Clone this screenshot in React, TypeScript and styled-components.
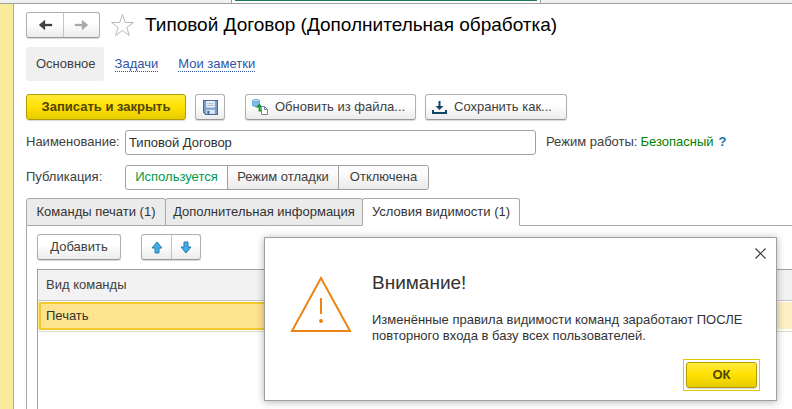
import React from 'react';
import styled, { createGlobalStyle, css } from 'styled-components';

const GlobalStyle = createGlobalStyle`
  *, *::before, *::after { box-sizing: border-box; }
  body {
    margin: 0;
    background: #fff;
    color: #404040;
    font: 13px/16px "Liberation Sans", Arial, sans-serif;
  }
  button, input { font: inherit; color: inherit; }
`;

const Shell = styled.div`
  position: relative;
  display: flex;
  flex-direction: column;
  height: 100vh;
  overflow: hidden;
`;

const TopStrip = styled.div`
  display: flex;
  flex: none;
  height: 4px;
  background: #f0f0f0;
  border-bottom: 1px solid #a0a0a0;
`;

const ActiveWindowTab = styled.div`
  width: 310px;
  margin-left: 231px;
  padding: 0 3px;
  background: #fff;
  border: solid #a0a0a0;
  border-width: 0 1px;

  &::before {
    content: '';
    display: block;
    height: 1px;
    background: #1f7a56;
  }
`;

const Workspace = styled.div`
  display: flex;
  flex: 1;
  min-height: 0;
`;

const SideBar = styled.div`
  flex: none;
  width: 14px;
  background: #f9eb9c;
  border-right: 1px solid #b9ae62;
`;

const Form = styled.main`
  display: flex;
  flex: 1;
  flex-direction: column;
  min-width: 0;
  padding: 8px 0 0 12px;
`;

const Header = styled.header`
  display: flex;
  align-items: center;
  height: 25px;
`;

const raised = css`
  background: linear-gradient(#fff 40%, #ececec);
  border: 1px solid #b0b0b0;
  border-bottom-color: #989898;
  border-radius: 3px;
  box-shadow: 0 1px 1px #d8d8d8;
`;

const ButtonPair = styled.div`
  ${raised}
  display: flex;
  height: 26px;
`;

const PairButton = styled.button<{ $width: number }>`
  display: grid;
  place-items: center;
  width: ${(p) => p.$width}px;
  padding: 0;
  background: none;
  border: 0;

  & + & { border-left: 1px solid #c4c4c4; }
`;

const StarButton = styled.button`
  display: flex;
  margin: 0 10px;
  padding: 0;
  background: none;
  border: 0;
`;

const Title = styled.h1`
  margin: 0;
  color: #000;
  font-size: 19px;
  font-weight: 400;
  line-height: 24px;
  white-space: nowrap;
`;

const SectionNav = styled.nav`
  display: flex;
  align-items: center;
  gap: 20px;
  height: 34px;
  margin-top: 10px;
`;

const CurrentSection = styled.span`
  padding: 9px 8px 9px 10px;
  margin-right: -9px;
  background: #f0f0f0;
  border-radius: 3px;
`;

const SectionLink = styled.a`
  color: #2f55a4;
  line-height: 14px;
  text-decoration: none;
  border-bottom: 1px dotted #2f55a4;
`;

const Toolbar = styled.div`
  display: flex;
  gap: 9px;
  margin-top: 13px;
`;

const Button = styled.button<{ $width: number }>`
  ${raised}
  display: flex;
  align-items: center;
  justify-content: center;
  width: ${(p) => p.$width}px;
  height: 26px;
  padding: 0;
  white-space: nowrap;
`;

const IconButton = styled(Button)`
  justify-content: flex-start;
  gap: 7px;
  padding: 0 6px;
`;

const PrimaryButton = styled(Button)`
  color: #514500;
  font-weight: 700;
  background: linear-gradient(#ffeb3b, #ffe100 50%, #e6cb00);
  border-color: #b29d00;
`;

const FileButtons = styled.div`
  display: flex;
  gap: 9px;
  margin-left: 11px;
`;

const FieldRow = styled.div`
  display: flex;
  align-items: center;
  height: 26px;
  margin-top: 9px;
`;

const FieldLabel = styled.label`
  flex: none;
  width: 99px;
`;

const TextInput = styled.input`
  flex: 0 1 411px;
  min-width: 0;
  height: 25px;
  padding: 0 3px;
  color: #303030;
  background: #fff;
  border: 1px solid #a0a0a0;
  border-radius: 3px;
`;

const ModeInfo = styled.div`
  display: flex;
  gap: 3px;
  margin-left: 10px;
  white-space: nowrap;
`;

const ModeValue = styled.span`
  color: #008000;
`;

const HelpLink = styled.a`
  margin-left: 2px;
  color: #1a72a8;
  font-weight: 700;
  text-decoration: none;
`;

const Segments = styled.fieldset`
  display: flex;
  height: 25px;
  margin: 0;
  padding: 0;
  border: 1px solid #a0a0a0;
  border-radius: 3px;
  overflow: hidden;
`;

const Segment = styled.label<{ $width: number }>`
  display: grid;
  place-items: center;
  width: ${(p) => p.$width}px;
  background: linear-gradient(#fcfcfc 30%, #eaeaea);

  & + & { border-left: 1px solid #a0a0a0; }
  &:has(input:checked) { color: #00994d; background: #fff; }
  input { position: absolute; opacity: 0; pointer-events: none; }
`;

const Tabs = styled.div`
  display: flex;
  flex: none;
  height: 28px;
  margin-top: 8px;

  &::after {
    content: '';
    flex: 1;
    border-bottom: 1px solid #a8a8a8;
  }
`;

const Tab = styled.button<{ $width: number; $active?: boolean }>`
  width: ${(p) => p.$width}px;
  padding: 0;
  color: #333;
  white-space: nowrap;
  background: ${(p) => (p.$active ? '#fff' : '#ebebeb')};
  border: 1px solid #a8a8a8;
  border-bottom-color: ${(p) => (p.$active ? '#fff' : '#a8a8a8')};
  border-radius: 3px 3px 0 0;

  & + & { margin-left: -1px; }
`;

const TabPanel = styled.section`
  display: flex;
  flex: 1;
  flex-direction: column;
  padding: 8px 0 0 10px;
  border-left: 1px solid #a8a8a8;
`;

const PanelToolbar = styled.div`
  display: flex;
  gap: 20px;
  height: 26px;
`;

const GridFrame = styled.div`
  flex: 1;
  margin-top: 9px;
  border: solid #a0a0a0;
  border-width: 1px 0 0 1px;
`;

const Grid = styled.table`
  width: 100%;
  border-spacing: 0;
  table-layout: fixed;

  th, td { padding: 0 8px; text-align: left; font-weight: 400; }
  th { height: 31px; background: #f2f2f2; border-bottom: 1px solid #c8c8c8; }
`;

const Cell = styled.td<{ $selected?: boolean }>`
  height: 30px;
  color: #333;
  background: #fdf0c4;
  border: solid #fff;
  border-width: 1px 0 2px;
  box-shadow: 0 1px #e0dcc6;

  ${(p) => p.$selected && css`
    background: #ffe48f;
    background-clip: padding-box;
    outline: 2px solid #f2ca2d;
    outline-offset: -3px;
  `}
`;

const Dialog = styled.section`
  position: absolute;
  top: 237px;
  left: 264px;
  display: grid;
  grid-template-columns: 62px 1fr;
  column-gap: 20px;
  width: 513px;
  height: 164px;
  padding: 34px 16px 9px 25px;
  color: #333;
  background: #fff;
  border: 1px solid #a0a0a0;
  box-shadow: 0 1px 8px rgba(0, 0, 0, .3);
`;

const CloseButton = styled.button`
  position: absolute;
  top: 10px;
  right: 10px;
  display: flex;
  padding: 0;
  background: none;
  border: 0;
`;

const DialogTitle = styled.h2`
  margin: 0 0 18px;
  font-size: 19px;
  font-weight: 400;
  line-height: 22px;
`;

const DialogText = styled.p`
  margin: 0;
`;

const DialogBody = styled.div`
  display: flex;
  flex-direction: column;
  min-width: 0;
`;

const WarningIcon = styled.svg`
  margin-top: 4px;
`;

const ConfirmFrame = styled.div`
  align-self: flex-end;
  margin-top: auto;
  padding: 2px;
  border: 1px solid #e5c800;
`;

function NavArrow({ color, flip }: { color: string; flip?: boolean }) {
  return (
    <svg width="15" height="12" viewBox="0 0 15 12">
      <path
        d={flip ? 'M1 5h7V1l6 5-6 5V7H1z' : 'M14 5H7V1L1 6l6 5V7h7z'}
        fill={color}
        stroke={color}
        strokeWidth=".3"
      />
    </svg>
  );
}

function MoveArrow({ down }: { down?: boolean }) {
  return (
    <svg width="12" height="13" viewBox="0 0 12 13">
      <path
        d={down ? 'M4 1h4v5h3L6 12 1 6h3z' : 'M6 1l5 6H8v5H4V7H1z'}
        fill="#42aee8"
        stroke="#287aad"
        strokeLinejoin="round"
      />
    </svg>
  );
}

export default function App() {
  return (
    <>
      <GlobalStyle />
      <Shell>
        <TopStrip><ActiveWindowTab /></TopStrip>
        <Workspace>
          <SideBar />
          <Form>
            <Header>
              <ButtonPair>
                <PairButton $width={36} aria-label="Назад"><NavArrow color="#404040" /></PairButton>
                <PairButton $width={36} aria-label="Вперёд"><NavArrow color="#a8a8a8" flip /></PairButton>
              </ButtonPair>
              <StarButton aria-label="В избранное">
                <svg width="25" height="24" viewBox="0 0 25 24" fill="#fff" stroke="#b4b9bf">
                  <path d="M12.5 1.5l2.7 8h8.3l-6.7 5 2.6 8-6.9-5-6.9 5 2.6-8-6.7-5h8.3z" />
                </svg>
              </StarButton>
              <Title>Типовой Договор (Дополнительная обработка)</Title>
            </Header>

            <SectionNav>
              <CurrentSection>Основное</CurrentSection>
              <SectionLink href="#tasks">Задачи</SectionLink>
              <SectionLink href="#notes">Мои заметки</SectionLink>
            </SectionNav>

            <Toolbar>
              <PrimaryButton $width={160}>Записать и закрыть</PrimaryButton>
              <Button $width={30} aria-label="Записать">
                <svg width="15" height="15" viewBox="0 0 14 14">
                  <path d="M.5.5h13v13h-11l-2-2z" fill="#7ba2ce" stroke="#486a98" />
                  <path d="M3 1h8v6H3z" fill="#f4f8fc" />
                  <path d="M4 3h6M4 5h6" stroke="#a3b7cd" />
                  <path d="M3 9h8v4H3z" fill="#dbe7f2" />
                  <path d="M4 10h2v3H4z" fill="#486a98" />
                </svg>
              </Button>
              <FileButtons>
                <IconButton $width={171}>
                  <svg width="16" height="16" viewBox="0 0 16 16">
                    <path d="M.5 1.500v5c0 1.500 7 1.500 7 0v-5z" fill="#7dbde5" stroke="#6aaad6" />
                    <ellipse cx="4" cy="1.700" rx="3.500" ry="1.200" fill="#c3e4f6" stroke="#6aaad6" />
                    <path d="M7.500 7v4.500H9" fill="none" stroke="#23903a" strokeWidth="2" />
                    <path d="M3.500 8.500l4-4 3 4z" fill="#23903a" />
                    <path d="M9.500 7.500h3l3 3v5h-6z" fill="#fff" stroke="#7188a2" />
                    <path d="M12.500 7.500v3h3" fill="none" stroke="#7188a2" />
                  </svg>
                  Обновить из файла...
                </IconButton>
                <IconButton $width={142}>
                  <svg width="15" height="13" viewBox="0 0 15 13">
                    <path d="M1 9v3h13V9" fill="none" stroke="#124466" strokeWidth="2" />
                    <path d="M7.500 0v6" stroke="#124466" strokeWidth="2" />
                    <path d="M3.500 5h8l-4 4z" fill="#124466" />
                  </svg>
                  Сохранить как...
                </IconButton>
              </FileButtons>
            </Toolbar>

            <FieldRow>
              <FieldLabel htmlFor="name">Наименование:</FieldLabel>
              <TextInput id="name" defaultValue="Типовой Договор" />
              <ModeInfo>
                <span>Режим работы:</span>
                <ModeValue>Безопасный</ModeValue>
                <HelpLink href="#help">?</HelpLink>
              </ModeInfo>
            </FieldRow>

            <FieldRow>
              <FieldLabel as="span" id="publication">Публикация:</FieldLabel>
              <Segments aria-labelledby="publication">
                <Segment $width={101}><input type="radio" name="publication" defaultChecked />Используется</Segment>
                <Segment $width={111}><input type="radio" name="publication" />Режим отладки</Segment>
                <Segment $width={90}><input type="radio" name="publication" />Отключена</Segment>
              </Segments>
            </FieldRow>

            <Tabs role="tablist">
              <Tab role="tab" $width={140}>Команды печати (1)</Tab>
              <Tab role="tab" $width={198}>Дополнительная информация</Tab>
              <Tab role="tab" aria-selected="true" $width={158} $active>Условия видимости (1)</Tab>
            </Tabs>
            <TabPanel>
              <PanelToolbar>
                <Button $width={84}>Добавить</Button>
                <ButtonPair>
                  <PairButton $width={29} aria-label="Переместить вверх"><MoveArrow /></PairButton>
                  <PairButton $width={29} aria-label="Переместить вниз"><MoveArrow down /></PairButton>
                </ButtonPair>
              </PanelToolbar>
              <GridFrame>
                <Grid>
                  <thead><tr><th>Вид команды</th><th /></tr></thead>
                  <tbody><tr><Cell $selected>Печать</Cell><Cell /></tr></tbody>
                </Grid>
              </GridFrame>
            </TabPanel>
          </Form>
        </Workspace>

        <Dialog role="dialog" aria-labelledby="dialog-title">
          <CloseButton aria-label="Закрыть">
            <svg width="11" height="11" viewBox="0 0 11 11" stroke="#404040" strokeWidth="1.200">
              <path d="M.5.5l10 10M10.500.5l-10 10" />
            </svg>
          </CloseButton>
          <WarningIcon width="62" height="57" viewBox="0 0 62 57" fill="none" stroke="#ed8413" strokeWidth="2">
            <path d="M31 2L60 55H2z" />
            <path d="M31 22v16" />
            <circle cx="31" cy="45" r="2" fill="#ed8413" stroke="none" />
          </WarningIcon>
          <DialogBody>
            <DialogTitle id="dialog-title">Внимание!</DialogTitle>
            <DialogText>
              Изменённые правила видимости команд заработают ПОСЛЕ
              <br />
              повторного входа в базу всех пользователей.
            </DialogText>
            <ConfirmFrame><PrimaryButton $width={71}>ОК</PrimaryButton></ConfirmFrame>
          </DialogBody>
        </Dialog>
      </Shell>
    </>
  );
}
